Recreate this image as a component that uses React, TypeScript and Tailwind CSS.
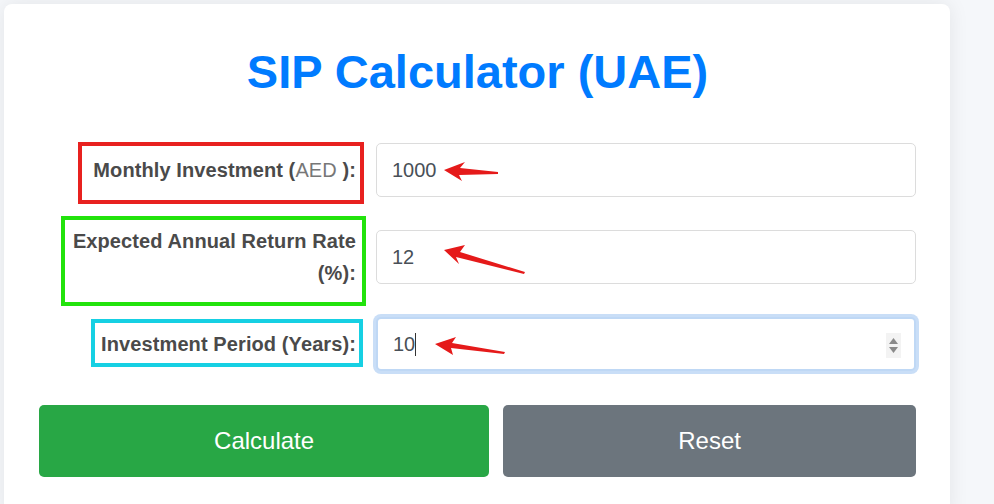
import { ReactNode } from "react";

interface RowProps {
    label: ReactNode;
    value: string;
    focused?: boolean;
}

function Row({ label, value, focused }: RowProps) {
    return (
        <div className="flex items-center gap-[20px]">
            <label className="w-[317px] shrink-0 text-right text-[20px] leading-[32px] font-bold tracking-[0.1px] text-[#4a4a4a]">
                {label}
            </label>
            <div className="relative flex-1">
                <input
                    type="text"
                    readOnly
                    value={value}
                    className={
                        focused
                            ? "w-full h-[54px] px-[15px] rounded-[5px] border-2 border-[#bfd8f5] ring-[3px] ring-[#c9def7] outline-none text-[20px] text-[#495057] bg-white"
                            : "w-full h-[54px] px-[15px] rounded-[5px] border border-[#dcdcdc] outline-none text-[20px] text-[#495057] bg-white"
                    }
                />
                {focused && (
                    <>
                        <span className="absolute left-[39px] top-[16px] w-px h-[23px] bg-[#333]" />
                        <div className="absolute right-[15px] top-[16px] w-[15px] h-[25px] bg-[#f3f3f3] flex flex-col items-center justify-center gap-[3px]">
                            <svg width="9" height="6" viewBox="0 0 9 6"><path d="M4.5 0 L9 6 L0 6 Z" fill="#8a8a8a" /></svg>
                            <svg width="9" height="6" viewBox="0 0 9 6"><path d="M0 0 L9 0 L4.5 6 Z" fill="#8a8a8a" /></svg>
                        </div>
                    </>
                )}
            </div>
        </div>
    );
}

export default function App() {
    return (
        <div className="relative min-h-[504px] bg-[#f5f7fa] pt-[4px] pl-[4px] overflow-hidden" style={{ fontFamily: '"Liberation Sans", Arial, sans-serif' }}>
            <div className="w-[946px] bg-white rounded-[8px] shadow-[0_0_20px_rgba(0,0,0,0.08)] pt-[41px] pl-[35px] pr-[34px] pb-[40px]">
                <h1 className="text-center text-[47px] leading-[54px] font-bold text-[#007bff] mb-[44px]">
                    SIP Calculator (UAE)
                </h1>

                <div className="flex flex-col gap-[28px]">
                    <Row
                        label={<>Monthly Investment (<span className="font-normal text-[#777]">AED</span> ):</>}
                        value="1000"
                    />
                    <Row label="Expected Annual Return Rate (%):" value="12" />
                    <Row label="Investment Period (Years):" value="10" focused />
                </div>

                <div className="flex gap-[14px] mt-[34px]">
                    <button className="flex-auto h-[72px] rounded-[5px] bg-[#28a745] text-white text-[24px]">
                        Calculate
                    </button>
                    <button className="flex-auto h-[72px] rounded-[5px] bg-[#6c757d] text-white text-[24px]">
                        Reset
                    </button>
                </div>
            </div>

            {/* annotation overlay */}
            <svg className="absolute left-0 top-0 pointer-events-none" width="994" height="504" viewBox="0 0 994 504">
                <rect x="80" y="144" width="282" height="58" fill="none" stroke="#e8211f" strokeWidth="4" />
                <rect x="63" y="218" width="301" height="86" fill="none" stroke="#22e30c" strokeWidth="4" />
                <rect x="93" y="321" width="268" height="44" fill="none" stroke="#16d0e3" strokeWidth="4" />

                <polygon points="444,170 465,162 460,168 498,172 498,174 459,175 462,181" fill="#e51a1a" />
                <polygon points="444,250 465,245 460,252 525,272 524,274 456,257 459,264" fill="#e51a1a" />
                <polygon points="435,344 456,337 452,343 505,352 504,354 451,348 453,355" fill="#e51a1a" />
            </svg>
        </div>
    );
}
